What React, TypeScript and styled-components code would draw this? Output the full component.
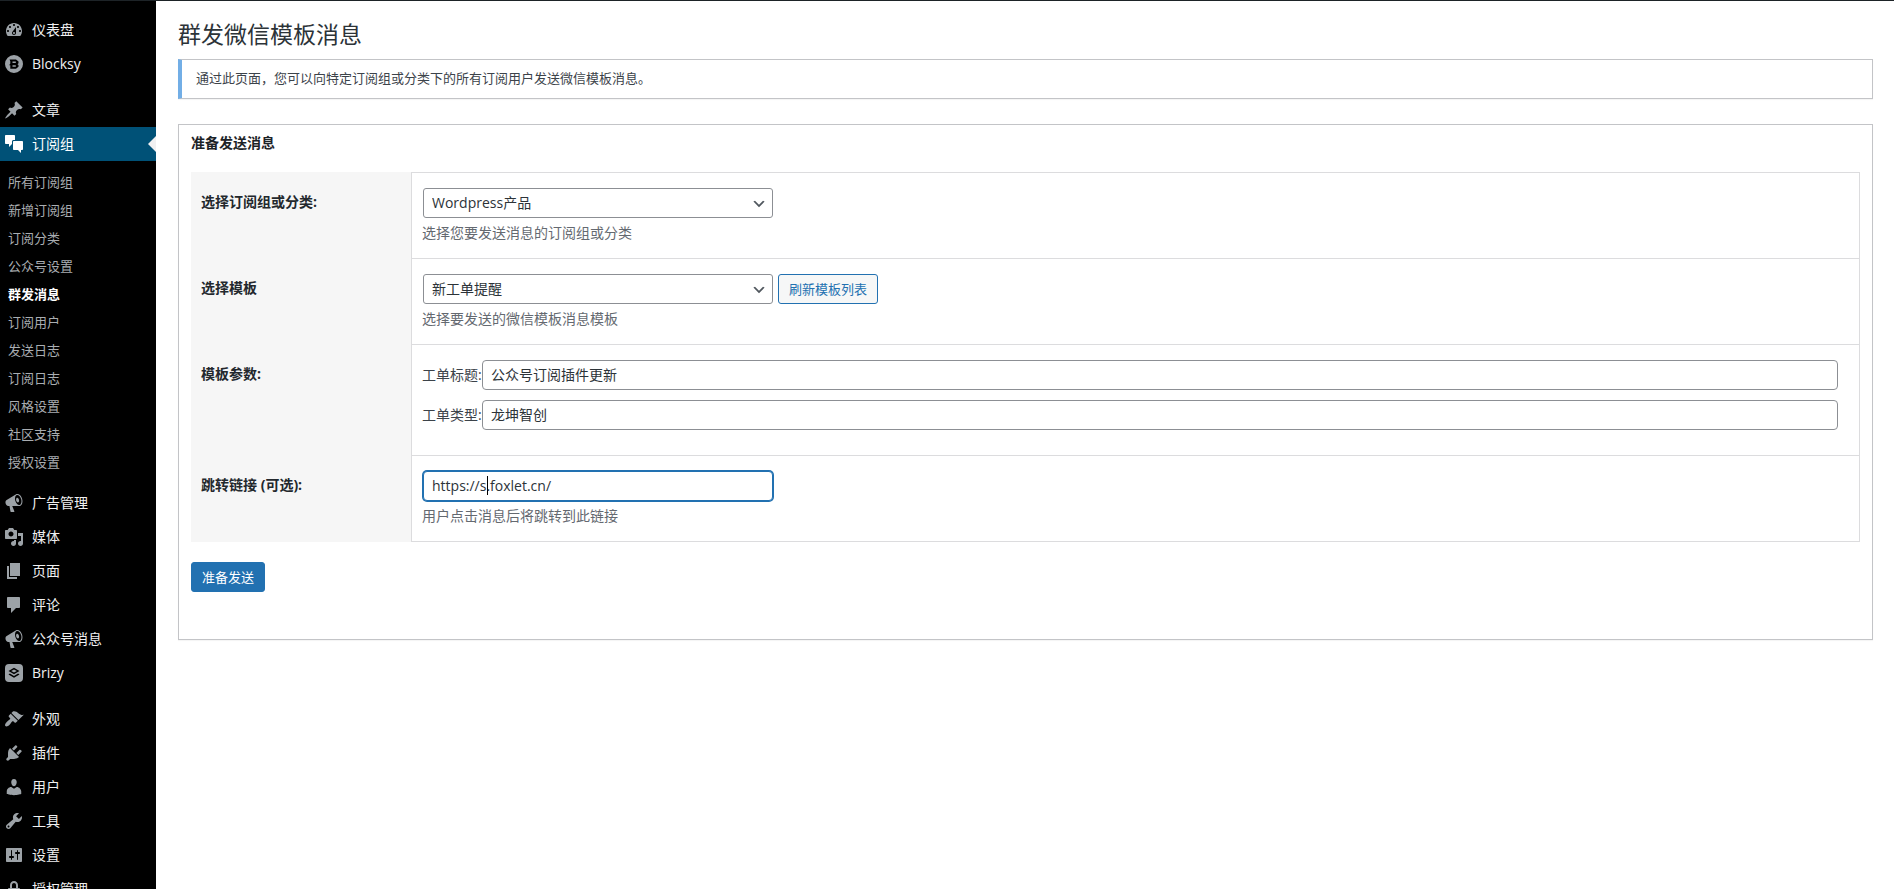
import React from "react";
import styled, { createGlobalStyle, css } from "styled-components";

const GlobalStyle = createGlobalStyle`
  *, *::before, *::after { box-sizing: border-box; }
  body {
    margin: 0;
    background: #fff;
    color: #3c434a;
    font-family: "Open Sans", "Noto Sans CJK SC", sans-serif;
    font-size: 14px;
    line-height: 20px;
  }
  button, input, select { font-family: inherit; }
`;

/* ---------- page frame ---------- */

const Page = styled.div`
  display: flex;
  height: 100vh;
  overflow: hidden;
  border-top: 1px solid #1d2327;
`;

const Sidebar = styled.nav`
  flex: none;
  width: 156px;
  padding-top: 12px;
  overflow: hidden;
  background: #000;
`;

const MenuList = styled.ul`
  list-style: none;
  margin: 0;
  padding: 0;
`;

const MenuItem = styled.li<{ $gap?: boolean }>`
  margin-top: ${(p) => (p.$gap ? "12px" : "0")};
`;

const MenuLink = styled.a<{ $active?: boolean }>`
  position: relative;
  display: flex;
  align-items: center;
  gap: 8px;
  height: 34px;
  padding-left: 4px;
  color: #f0f0f1;
  text-decoration: none;
  white-space: nowrap;

  svg {
    flex: none;
    width: 20px;
    height: 20px;
    fill: #9ca2a7;
  }

  ${(p) =>
    p.$active &&
    css`
      background: #005177;
      color: #fff;
      svg {
        fill: #fff;
      }
      &::after {
        content: "";
        position: absolute;
        right: 0;
        top: 50%;
        margin-top: -8px;
        border: 8px solid transparent;
        border-left-width: 0;
        border-right-color: #f0f0f1;
      }
    `}
`;

const SubMenu = styled.ul`
  list-style: none;
  margin: 0;
  padding: 7px 0 10px;
`;

const SubLink = styled.a<{ $current?: boolean }>`
  display: block;
  padding: 4px 8px;
  font-size: 13px;
  line-height: 20px;
  text-decoration: none;
  color: ${(p) => (p.$current ? "#fff" : "#a9adb1")};
  font-weight: ${(p) => (p.$current ? 700 : 400)};
`;

const Main = styled.main`
  flex: 1;
  min-width: 0;
  padding: 18px 21px 0 22px;
`;

const PageTitle = styled.h1`
  margin: 0 0 10px;
  font-size: 23px;
  font-weight: 400;
  line-height: 30px;
  color: #2c3338;
`;

const Notice = styled.div`
  padding: 8px 14px 10px;
  border: 1px solid #c3c4c7;
  border-left: 4px solid #72aee6;
  box-shadow: 0 1px 1px rgba(0, 0, 0, 0.04);
  font-size: 13px;
`;

const Card = styled.form`
  margin-top: 25px;
  padding: 8px 12px 47px;
  border: 1px solid #c3c4c7;
  box-shadow: 0 1px 1px rgba(0, 0, 0, 0.04);
`;

const CardTitle = styled.h2`
  margin: 0 0 19px;
  font-size: 14px;
  font-weight: 700;
  line-height: 20px;
  color: #1d2327;
`;

/* ---------- form ---------- */

const Rows = styled.div`
  margin-bottom: 20px;
`;

const HeadCell = styled.div`
  flex: none;
  width: 220px;
  padding: 20px 10px;
  background: #f6f6f6;
  color: #23282d;
  font-weight: 700;
`;

const BodyCell = styled.div`
  flex: 1;
  min-width: 0;
  padding: 15px 10px;
  border: 1px solid #dcdcde;
  border-bottom: 0;
`;

const Row = styled.div`
  display: flex;

  &:last-child ${BodyCell} {
    border-bottom: 1px solid #dcdcde;
  }
`;

const Controls = styled.div`
  display: flex;
  align-items: center;
  gap: 5px;
  padding-left: 1px;
`;

const Hint = styled.p`
  margin: 5px 0 0;
  color: #646970;
`;

const field = css`
  height: 30px;
  margin: 0;
  padding: 0 8px;
  border: 1px solid #8c8f94;
  border-radius: 4px;
  background: #fff;
  color: #2c3338;
  font-size: 14px;
  line-height: 28px;
  outline: 0;
`;

const SelectBox = styled.div`
  position: relative;
  width: 350px;

  svg {
    position: absolute;
    right: 6px;
    top: 8px;
    width: 16px;
    height: 16px;
    fill: #50575e;
    pointer-events: none;
  }
`;

const Select = styled.select`
  ${field}
  display: block;
  width: 100%;
  padding: 0 24px 0 8px;
  border-radius: 3px;
  appearance: none;
`;

const UrlBox = styled.div`
  position: relative;
  width: 350px;
`;

const UrlInput = styled.input`
  ${field}
  display: block;
  width: 100%;
  padding-bottom: 2px;
  border-color: #2271b1;
  box-shadow: 0 0 0 1px #2271b1;
`;

const Caret = styled.span`
  position: absolute;
  left: 64px;
  top: 5px;
  width: 1px;
  height: 19px;
  background: #000;
`;

const Param = styled.div`
  display: flex;
  align-items: center;
  margin-bottom: 10px;
`;

const ParamLabel = styled.label`
  flex: none;
  width: 60px;
  white-space: nowrap;
`;

const ParamInput = styled.input`
  ${field}
  flex: none;
  width: 95%;
  padding-bottom: 2px;
`;

const Button = styled.button<{ $primary?: boolean }>`
  height: 30px;
  padding: 0 10px;
  border: 1px solid #2271b1;
  border-radius: 3px;
  background: ${(p) => (p.$primary ? "#2271b1" : "#f6f7f7")};
  color: ${(p) => (p.$primary ? "#fff" : "#2271b1")};
  font-size: 13px;
  line-height: 28px;
  white-space: nowrap;
  cursor: pointer;
`;

/* ---------- icons ---------- */

const icons = {
  dashboard:
    "M3.76 16h12.48c1.1-1.37 1.76-3.11 1.76-5 0-4.42-3.58-8-8-8s-8 3.58-8 8c0 1.89.66 3.63 1.76 5zM10 4c.55 0 1 .45 1 1s-.45 1-1 1-1-.45-1-1 .45-1 1-1zM6 6c.55 0 1 .45 1 1s-.45 1-1 1-1-.45-1-1 .45-1 1-1zm8 0c.55 0 1 .45 1 1s-.45 1-1 1-1-.45-1-1 .45-1 1-1zm-5.37 5.55L12 7v6c0 1.1-.9 2-2 2s-2-.9-2-2c0-.57.24-1.08.63-1.45zM4 10c.55 0 1 .45 1 1s-.45 1-1 1-1-.45-1-1 .45-1 1-1zm12 0c.55 0 1 .45 1 1s-.45 1-1 1-1-.45-1-1 .45-1 1-1zm-5 3c0-.55-.45-1-1-1s-1 .45-1 1 .45 1 1 1 1-.45 1-1z",
  blocksy:
    "M10 1a9 9 0 1 0 0 18a9 9 0 1 0 0-18zM5.500 5.500H12l2.500 2v1.800l-1 .9 1 .9v1.600l-2.500 2.100H6.300v-3.600H5.200L6.300 9.500V7.300zM8.500 7.500v1.500h3.300V7.500zM8.500 11.200v1.500h3.300v-1.500z",
  post: "M10.44 3.02l1.82-1.82 6.36 6.35-1.83 1.82c-1.05-.68-2.48-.57-3.41.36l-.75.75c-.92.93-1.04 2.35-.35 3.41l-1.83 1.82-2.41-2.41-2.8 2.79c-.42.42-3.38 2.71-3.8 2.29s1.86-3.39 2.28-3.81l2.79-2.79L4.1 9.36l1.83-1.82c1.05.69 2.48.57 3.4-.36l.75-.75c.93-.92 1.05-2.35.36-3.41z",
  chat: "M11 6h-1.500c-.9 0-1.500.7-1.500 1.500V10l-3 3v-3H2c-.55 0-1-.45-1-1V2c0-.55.45-1 1-1h8c.55 0 1 .45 1 1v4zm0 1h7c.55 0 1 .45 1 1v7c0 .55-.45 1-1 1h-1v3l-3-3h-4c-.55 0-1-.45-1-1V8c0-.55.45-1 1-1z",
  megaphone:
    "M18.15 5.94c.46 1.62.38 3.22-.02 4.48-.42 1.28-1.26 2.18-2.3 2.48-.16.06-.26.06-.4.06-.06.02-.12.02-.18.02-.06.02-.14.02-.22.02h-6.8l2.22 5.5c.02.14-.06.26-.14.34-.08.1-.24.16-.34.16H6.950c-.1 0-.26-.06-.34-.16-.08-.08-.16-.2-.14-.34l-1-5.5H4.250l-.02-.02c-.5.06-1.08-.18-1.54-.62s-.88-1.08-1.06-1.88c-.24-.8-.2-1.56-.02-2.2.18-.62.58-1.08 1.06-1.3l.02-.02 9-5.4c.1-.06.18-.1.24-.16.06-.04.14-.08.24-.12.16-.08.28-.12.5-.18 1.04-.3 2.24.1 3.22.98s1.84 2.24 2.26 3.860zm-2.58 5.980h-.02c.4-.1.74-.34 1.04-.7.58-.7.86-1.76.86-3.04 0-.64-.1-1.3-.28-1.98-.34-1.36-1.02-2.5-1.78-3.24s-1.68-1.1-2.46-.88c-.82.22-1.4.96-1.7 2-.32 1.04-.28 2.36.06 3.72.38 1.36 1 2.5 1.8 3.24.78.74 1.62 1.1 2.48.88zm-2.54-7.080c.22-.04.42-.02.62.04.38.16.76.48 1.02 1s.42 1.2.42 1.78c0 .3-.04.56-.12.8-.18.48-.44.84-.86.94-.34.1-.8-.06-1.14-.4s-.64-.86-.78-1.5c-.18-.62-.12-1.24.02-1.72s.48-.84.82-.94z",
  media:
    "M13 11V4c0-.55-.45-1-1-1h-1.67L9 1H5L3.67 3H2c-.55 0-1 .45-1 1v7c0 .55.45 1 1 1h10c.55 0 1-.45 1-1zM7 4.500c1.380 0 2.500 1.120 2.500 2.500S8.380 9.500 7 9.500 4.500 8.380 4.500 7 5.620 4.500 7 4.500zM14 6h5v10.500c0 1.380-1.120 2.500-2.500 2.500S14 17.880 14 16.500s1.120-2.500 2.500-2.500c.17 0 .34.02.5.05V9h-3V6zm-4 8.050V13h2v3.500c0 1.380-1.120 2.500-2.500 2.500S7 17.880 7 16.500 8.120 14 9.500 14c.17 0 .34.02.5.05z",
  page: "M6 15V2h10v13H6zm-1 1h8v2H3V5h2v11z",
  comment:
    "M4 2h11c.55 0 1 .45 1 1v9c0 .55-.45 1-1 1h-3l-5 5v-5H4c-.55 0-1-.45-1-1V3c0-.55.45-1 1-1z",
  brizy:
    "M5 1h10a4 4 0 0 1 4 4v10a4 4 0 0 1-4 4H5a4 4 0 0 1-4-4V5a4 4 0 0 1 4-4zM10 4.800L4.500 8 10 11.200 15.500 8zM10 6.400L12.800 8 10 9.600 7.200 8zM5.900 10.500L4.500 11.400 10 14.800l5.500-3.400-1.400-.9L10 13z",
  appearance:
    "M14.48 11.06L7.41 3.99l1.5-1.5c.5-.56 2.3-.47 3.51.32 1.21.8 1.43 1.28 2.91 2.1 1.18.64 2.45 1.26 4.45.85zm-.71.71L6.7 4.7 4.93 6.47c-.39.39-.39 1.02 0 1.41l1.06 1.06c.39.39.39 1.03 0 1.42-.6.6-1.43 1.11-2.21 1.69-.35.26-.7.53-1.01.84C1.43 14.23.4 16.08 1.4 17.07c.99 1 2.84-.03 4.18-1.36.31-.31.58-.66.85-1.02.57-.78 1.08-1.61 1.69-2.21.39-.39 1.02-.39 1.41 0l1.06 1.06c.39.39 1.02.39 1.41 0z",
  plugins:
    "M13.11 4.36L9.87 7.6 8 5.73l3.24-3.24c.35-.34 1.05-.2 1.56.32.52.51.66 1.21.31 1.55zm-8 1.77l.91-1.12 9.01 9.01-1.19.84c-.71.71-2.63 1.16-3.82 1.16H6.14L4.9 17.26c-.59.59-1.54.59-2.12 0-.59-.58-.59-1.53 0-2.12l1.24-1.24v-3.88c0-1.13.4-3.19 1.09-3.89zm7.26 3.97l3.24-3.24c.34-.35 1.04-.21 1.55.31.52.51.66 1.21.31 1.55l-3.24 3.25z",
  users:
    "M10 9.250c-2.270 0-2.730-3.440-2.730-3.440C7 4.020 7.820 2 9.970 2c2.160 0 2.980 2.020 2.710 3.810 0 0-.41 3.440-2.680 3.440zm0 2.570L12.720 10c2.390 0 4.520 2.330 4.520 4.530v2.490s-3.650 1.130-7.240 1.130c-3.650 0-7.240-1.130-7.240-1.130v-2.490c0-2.250 1.940-4.480 4.470-4.480z",
  tools:
    "M16.68 9.77c-1.34 1.34-3.3 1.67-4.95.99l-5.41 6.52c-.99.99-2.59.99-3.58 0s-.99-2.59 0-3.57l6.52-5.42c-.68-1.65-.35-3.61.99-4.95 1.28-1.28 3.12-1.62 4.72-1.06l-2.89 2.89 2.82 2.82 2.86-2.87c.53 1.58.18 3.39-1.08 4.65zM3.81 16.21c.4.39 1.04.39 1.43 0 .4-.4.4-1.04 0-1.43-.39-.4-1.03-.4-1.43 0-.39.39-.39 1.03 0 1.43z",
  settings:
    "M18 16V4c0-.55-.45-1-1-1H3c-.55 0-1 .45-1 1v12c0 .55.45 1 1 1h14c.55 0 1-.45 1-1zM8 11h1c.55 0 1 .45 1 1s-.45 1-1 1H8v1.5c0 .28-.22.5-.5.5s-.5-.22-.5-.5V13H6c-.55 0-1-.45-1-1s.45-1 1-1h1V5.5c0-.28.22-.5.5-.5s.5.22.5.5V11zm5-2h-1c-.55 0-1-.45-1-1s.45-1 1-1h1V5.500c0-.28.22-.5.5-.5s.5.22.5.5V7h1c.55 0 1 .45 1 1s-.45 1-1 1h-1v5.500c0 .28-.22.5-.5.5s-.5-.22-.5-.5V9z",
  lock: "M14 9h1c.55 0 1 .45 1 1v7c0 .55-.45 1-1 1H5c-.55 0-1-.45-1-1v-7c0-.55.45-1 1-1h1V6c0-2.210 1.790-4 4-4s4 1.790 4 4v3zm-2 0V6c0-1.100-.9-2-2-2s-2 .9-2 2v3h4z",
};

type IconName = keyof typeof icons;

const Icon = ({ name }: { name: IconName }) => (
  <svg viewBox="0 0 20 20" aria-hidden="true">
    <path fillRule="evenodd" d={icons[name]} />
  </svg>
);

const Chevron = () => (
  <svg viewBox="0 0 20 20" aria-hidden="true">
    <path d="M5 6l5 5 5-5 2 1-7 7-7-7 2-1z" />
  </svg>
);

/* ---------- data ---------- */

interface Entry {
  label: string;
  icon: IconName;
  gap?: boolean;
  children?: string[];
}

const menu: Entry[] = [
  { label: "仪表盘", icon: "dashboard" },
  { label: "Blocksy", icon: "blocksy" },
  { label: "文章", icon: "post", gap: true },
  {
    label: "订阅组",
    icon: "chat",
    children: [
      "所有订阅组",
      "新增订阅组",
      "订阅分类",
      "公众号设置",
      "群发消息",
      "订阅用户",
      "发送日志",
      "订阅日志",
      "风格设置",
      "社区支持",
      "授权设置",
    ],
  },
  { label: "广告管理", icon: "megaphone" },
  { label: "媒体", icon: "media" },
  { label: "页面", icon: "page" },
  { label: "评论", icon: "comment" },
  { label: "公众号消息", icon: "megaphone" },
  { label: "Brizy", icon: "brizy" },
  { label: "外观", icon: "appearance", gap: true },
  { label: "插件", icon: "plugins" },
  { label: "用户", icon: "users" },
  { label: "工具", icon: "tools" },
  { label: "设置", icon: "settings" },
  { label: "授权管理", icon: "lock" },
];

const currentPage = "群发消息";

const params = [
  { id: "param-title", label: "工单标题:", value: "公众号订阅插件更新" },
  { id: "param-type", label: "工单类型:", value: "龙坤智创" },
];

export default function App() {
  return (
    <>
      <GlobalStyle />
      <Page>
        <Sidebar>
          <MenuList>
            {menu.map((item) => (
              <MenuItem key={item.label} $gap={item.gap}>
                <MenuLink href="#" $active={!!item.children}>
                  <Icon name={item.icon} />
                  {item.label}
                </MenuLink>
                {item.children && (
                  <SubMenu>
                    {item.children.map((label) => (
                      <li key={label}>
                        <SubLink href="#" $current={label === currentPage}>
                          {label}
                        </SubLink>
                      </li>
                    ))}
                  </SubMenu>
                )}
              </MenuItem>
            ))}
          </MenuList>
        </Sidebar>

        <Main>
          <PageTitle>群发微信模板消息</PageTitle>
          <Notice>通过此页面，您可以向特定订阅组或分类下的所有订阅用户发送微信模板消息。</Notice>

          <Card onSubmit={(e) => e.preventDefault()}>
            <CardTitle>准备发送消息</CardTitle>
            <Rows>
              <Row>
                <HeadCell>
                  <label htmlFor="group">选择订阅组或分类:</label>
                </HeadCell>
                <BodyCell>
                  <Controls>
                    <SelectBox>
                      <Select id="group">
                        <option>Wordpress产品</option>
                      </Select>
                      <Chevron />
                    </SelectBox>
                  </Controls>
                  <Hint>选择您要发送消息的订阅组或分类</Hint>
                </BodyCell>
              </Row>
              <Row>
                <HeadCell>
                  <label htmlFor="template">选择模板</label>
                </HeadCell>
                <BodyCell>
                  <Controls>
                    <SelectBox>
                      <Select id="template">
                        <option>新工单提醒</option>
                      </Select>
                      <Chevron />
                    </SelectBox>
                    <Button type="button">刷新模板列表</Button>
                  </Controls>
                  <Hint>选择要发送的微信模板消息模板</Hint>
                </BodyCell>
              </Row>
              <Row>
                <HeadCell>模板参数:</HeadCell>
                <BodyCell>
                  {params.map((p) => (
                    <Param key={p.id}>
                      <ParamLabel htmlFor={p.id}>{p.label}</ParamLabel>
                      <ParamInput id={p.id} type="text" defaultValue={p.value} />
                    </Param>
                  ))}
                </BodyCell>
              </Row>
              <Row>
                <HeadCell>
                  <label htmlFor="link">跳转链接 (可选):</label>
                </HeadCell>
                <BodyCell>
                  <Controls>
                    <UrlBox>
                      <UrlInput id="link" type="url" defaultValue="https://s.foxlet.cn/" />
                      <Caret aria-hidden="true" />
                    </UrlBox>
                  </Controls>
                  <Hint>用户点击消息后将跳转到此链接</Hint>
                </BodyCell>
              </Row>
            </Rows>
            <Button type="submit" $primary>
              准备发送
            </Button>
          </Card>
        </Main>
      </Page>
    </>
  );
}
